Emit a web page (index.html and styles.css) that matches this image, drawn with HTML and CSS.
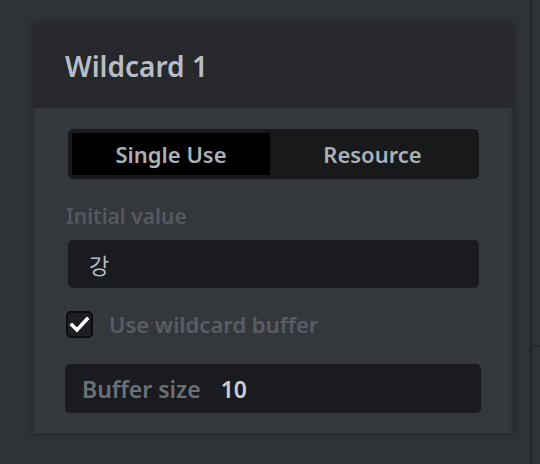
FILE: index.html
```html
<!DOCTYPE html>
<html>
<head>
  <title>Wildcard</title>
  <link rel="stylesheet" href="styles.css">
</head>
<body>
  <div class="layout">
    <div class="main">
      <div class="card">
        <div class="card-header">
          <h1>Wildcard 1</h1>
        </div>
        <div class="card-body">
          <div class="segmented">
            <div class="segment active">Single Use</div>
            <div class="segment">Resource</div>
          </div>
          <label class="field-label">Initial value</label>
          <div class="text-field">강</div>
          <div class="check-row">
            <span class="checkbox">
              <svg width="21" height="17" viewBox="0 0 21 17">
                <path d="M3 9 L8 14 L18 3" fill="none" stroke="#fff" stroke-width="3.6" stroke-linecap="square"/>
              </svg>
            </span>
            <span class="check-label">Use wildcard buffer</span>
          </div>
          <div class="text-field buffer">
            <span class="buffer-label">Buffer size</span>
            <span class="buffer-value">10</span>
          </div>
        </div>
      </div>
    </div>
    <div class="divider"></div>
    <div class="side">
      <div class="side-top"></div>
    </div>
  </div>
</body>
</html>
```

FILE: styles.css
```css
/* Wildcard panel */
body {
  margin: 0;
  background-color: #2f3237;
  font-family: "Noto Sans", "Noto Sans CJK KR", sans-serif;
  overflow: hidden;
}

.layout {
  display: flex;
  height: 464px;
}

.main {
  flex: 1;
  padding: 24px 0 0 33px;
}

.divider {
  width: 4px;
  background-color: #25272b;
}

.side {
  width: 7px;
  background-color: #2f3237;
}

.side-top {
  height: 345px;
  border-bottom: 2px solid #26282c;
}

.card {
  width: 480px;
  box-shadow: 0 0 8px rgba(0, 0, 0, 0.35);
  border-radius: 4px 4px 0 0;
}

.card-header {
  height: 84px;
  background-color: #26282c;
  border-radius: 4px 4px 0 0;
  display: flex;
  align-items: center;
  padding-left: 32px;
}

h1 {
  margin: 0;
  font-size: 28px;
  font-weight: 600;
  color: #b7bdc5;
}

.card-body {
  margin: 0 2px;
  background-color: #34373c;
  padding: 21px 32px 20px 33px;
}

.segmented {
  display: flex;
  height: 50px;
  padding: 4px 4px;
  box-sizing: border-box;
  background-color: #18191b;
  border-radius: 5px;
}

.segment {
  flex: 1;
  display: flex;
  align-items: center;
  justify-content: center;
  font-size: 22px;
  font-weight: 600;
  color: #aab0b8;
}

.segment.active {
  flex: 0 0 198px;
  background-color: #000;
}

.field-label {
  display: block;
  margin: 22px 0 9px -2px;
  font-size: 21px;
  line-height: 30px;
  font-weight: 600;
  color: #55595f;
}

.text-field {
  height: 48px;
  display: flex;
  align-items: center;
  padding-left: 21px;
  background-color: #1a1b1e;
  border-radius: 5px;
  font-size: 22px;
  color: #b5bbc3;
}

.check-row {
  display: flex;
  align-items: center;
  gap: 16px;
  margin: 21px 0 25px -2px;
}

.checkbox {
  width: 27px;
  height: 27px;
  box-sizing: border-box;
  border: 2px solid #0c0d0f;
  border-radius: 5px;
  background-color: #1d1e21;
  display: flex;
  align-items: center;
  justify-content: center;
}

.check-label {
  font-size: 22px;
  font-weight: 600;
  color: #595d63;
}

.text-field.buffer {
  margin: 1px -2px 0 -3px;
  height: 49px;
  padding-left: 17px;
  gap: 20px;
}

.buffer-label {
  font-size: 23px;
  font-weight: 600;
  color: #6b7077;
}

.buffer-value {
  font-size: 23px;
  font-weight: 600;
  color: #c9cdd3;
}
```
